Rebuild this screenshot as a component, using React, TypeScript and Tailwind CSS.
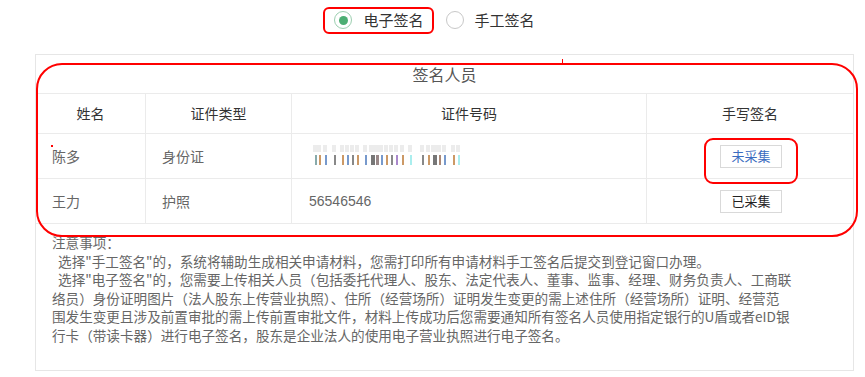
import React from 'react';

const bars = [
  [14, 2, '#8aa'], [18, 2, '#c96'], [24, 2, '#79c'], [33, 2, '#888'], [41, 2, '#c96'], [46, 2, '#79c'],
  [51, 2, '#888'], [56, 2, '#c96'], [64, 2, '#79c'], [70, 4, '#777'], [75, 3, '#988'], [80, 2, '#79c'],
  [85, 2, '#c96'], [90, 2, '#888'], [95, 2, '#a8c'], [101, 2, '#c96'], [109, 2, '#aee'], [121, 2, '#888'],
  [127, 2, '#c96'], [132, 4, '#777'], [138, 2, '#a87'], [143, 2, '#79c'], [152, 2, '#c96'], [157, 2, '#aee'],
];

const BlurredId = () => (
  <svg width="170" height="24" viewBox="0 0 170 24">
    {bars.map(([x, w, c], i) => (
      <g key={i}>
        <rect x={(x as number) - 2} y={1} width={(w as number) + 2} height={7} fill="#ececec" />
        <rect x={x as number} y={11} width={w as number} height={10} fill={c as string} />
      </g>
    ))}
  </svg>
);

const rows = [
  { name: '陈多', type: '身份证', id: null, status: '未采集', blue: true },
  { name: '王力', type: '护照', id: '56546546', status: '已采集', blue: false },
];

export default function App() {
  return (
    <div className="relative w-[865px] h-[377px] bg-white text-[#666] overflow-hidden" style={{ fontFamily: '"Microsoft YaHei", "Noto Sans CJK SC", "Noto Sans", sans-serif' }}>
      {/* radio switch */}
      <div className="flex justify-center items-center gap-[22px] h-[40px] pl-[4px]">
        <label className="flex items-center gap-[11px]">
          <span className="w-[18px] h-[18px] rounded-full border border-[#9ccfb0] flex items-center justify-center">
            <span className="w-[9px] h-[9px] rounded-full bg-[#4cae73]" />
          </span>
          <span className="text-[15px] text-[#333]">电子签名</span>
        </label>
        <label className="flex items-center gap-[11px]">
          <span className="w-[18px] h-[18px] rounded-full border border-[#c8c8c8]" />
          <span className="text-[15px] text-[#333]">手工签名</span>
        </label>
      </div>

      {/* panel */}
      <div className="ml-[35px] mt-[14px] w-[819px] h-[317px] border border-[#e6e6e6]">
        <div className="h-[39px] flex items-center justify-center text-[16px] text-[#555] border-b border-[#ebebeb]">签名人员</div>
        <div className="grid grid-cols-[110px_146px_355px_1fr] h-[40px] border-b border-[#ebebeb] text-[14px] text-[#333]">
          <div className="flex items-center justify-center border-r border-[#ebebeb]">姓名</div>
          <div className="flex items-center justify-center border-r border-[#ebebeb]">证件类型</div>
          <div className="flex items-center justify-center border-r border-[#ebebeb]">证件号码</div>
          <div className="flex items-center justify-center">手写签名</div>
        </div>
        {rows.map((r, i) => (
          <div key={i} className="grid grid-cols-[110px_146px_355px_1fr] h-[45px] border-b border-[#ebebeb] text-[14px]">
            <div className="flex items-center pl-[16px] border-r border-[#ebebeb]">{r.name}</div>
            <div className="flex items-center pl-[16px] border-r border-[#ebebeb]">{r.type}</div>
            <div className="flex items-center pl-[17px] border-r border-[#ebebeb]" style={{ fontFamily: 'Arial, "Liberation Sans", sans-serif' }}>
              {r.id ?? <span className="-ml-[8px]"><BlurredId /></span>}
            </div>
            <div className="flex items-center justify-center pl-[2px]">
              <button className={`w-[62px] h-[23px] border border-[#d9d9d9] text-[13px] ${r.blue ? 'text-[#3a6cc0]' : 'text-[#222]'}`}>{r.status}</button>
            </div>
          </div>
        ))}
        <div className="pl-[16px] pt-[9px] text-[13.6px] leading-[18.6px] text-[#666] whitespace-nowrap">
          <div>注意事项：</div>
          <div>&nbsp;&nbsp;选择"手工签名"的，系统将辅助生成相关申请材料，您需打印所有申请材料手工签名后提交到登记窗口办理。</div>
          <div>&nbsp;&nbsp;选择"电子签名"的，您需要上传相关人员（包括委托代理人、股东、法定代表人、董事、监事、经理、财务负责人、工商联</div>
          <div>络员）身份证明图片（法人股东上传营业执照）、住所（经营场所）证明发生变更的需上述住所（经营场所）证明、经营范</div>
          <div>围发生变更且涉及前置审批的需上传前置审批文件，材料上传成功后您需要通知所有签名人员使用指定银行的U盾或者eID银</div>
          <div>行卡（带读卡器）进行电子签名，股东是企业法人的使用电子营业执照进行电子签名。</div>
        </div>
      </div>

      {/* red annotations */}
      <div className="absolute left-[323px] top-[7px] w-[111px] h-[27px] border-2 border-[#f00] rounded-[6px]" />
      <div className="absolute left-[36px] top-[63px] w-[822px] h-[174px] border-2 border-[#f00] rounded-[26px]" />
      <div className="absolute left-[704px] top-[138px] w-[94px] h-[46px] border-2 border-[#f00] rounded-[9px]" />
      <div className="absolute left-[51px] top-[145px] w-[2px] h-[2px] bg-[#f00]" />
      <div className="absolute left-[562px] top-[59px] w-[1px] h-[5px] bg-[#f00]" />
    </div>
  );
}
